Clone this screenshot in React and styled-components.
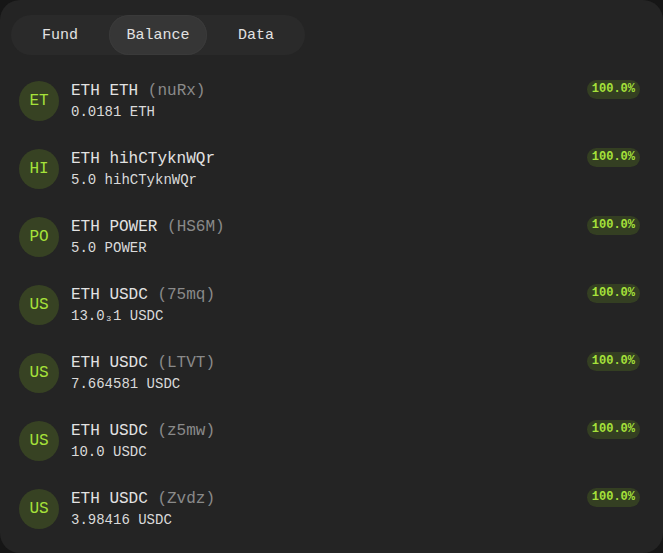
import React from "react";
import styled, { createGlobalStyle } from "styled-components";

const Global = createGlobalStyle`
  html, body {
    margin: 0;
    padding: 0;
    background: #161616;
  }
  body {
    font-family: "Liberation Mono", "DejaVu Sans Mono", monospace;
    -webkit-font-smoothing: antialiased;
  }
`;

const Panel = styled.div`
  width: 663px;
  height: 553px;
  box-sizing: border-box;
  background: #242424;
  border-radius: 20px;
  padding: 15px 0 10px 0;
  display: flex;
  flex-direction: column;
  overflow: hidden;
`;

const TabBar = styled.div`
  flex: none;
  margin-left: 11px;
  width: 294px;
  height: 40px;
  display: grid;
  grid-template-columns: repeat(3, 1fr);
  background: #2a2a2a;
  border-radius: 999px;
`;

const Tab = styled.button`
  all: unset;
  display: flex;
  align-items: center;
  justify-content: center;
  border-radius: 999px;
  font-family: "Liberation Mono", "DejaVu Sans Mono", monospace;
  font-size: 15px;
  color: #e2e2e2;
  background: ${(p) => (p.$active ? "#363636" : "transparent")};
  box-shadow: ${(p) => (p.$active ? "inset 0 0 0 1px #3a3a3a" : "none")};
  cursor: pointer;
`;

const List = styled.div`
  flex: none;
  margin-top: 12px;
  display: flex;
  flex-direction: column;
`;

const Row = styled.div`
  display: flex;
  align-items: center;
  gap: 12px;
  height: 68px;
  box-sizing: border-box;
  padding: 0 23px 0 19px;
`;

const Avatar = styled.div`
  flex: none;
  width: 40px;
  height: 40px;
  border-radius: 50%;
  background: #374223;
  color: #a6e23a;
  display: flex;
  align-items: center;
  justify-content: center;
  font-size: 16px;
`;

const Info = styled.div`
  flex: 1;
  display: flex;
  flex-direction: column;
  min-width: 0;
`;

const Title = styled.div`
  font-size: 16px;
  line-height: 20px;
  color: #e2e2e2;
`;

const Addr = styled.span`
  color: #8a8a8a;
`;

const Amount = styled.div`
  font-size: 14px;
  line-height: 20px;
  padding-top: 1px;
  color: #dadada;
`;

const Badge = styled.span`
  align-self: flex-start;
  margin-top: 13px;
  padding: 2px 5px;
  border-radius: 999px;
  background: #343f22;
  color: #a6e23a;
  font-size: 12px;
  font-weight: 700;
  line-height: 15px;
`;

const tokens = [
  { tag: "ET", name: "ETH ETH", addr: "nuRx", amount: "0.0181 ETH" },
  { tag: "HI", name: "ETH hihCTyknWQr", addr: null, amount: "5.0 hihCTyknWQr" },
  { tag: "PO", name: "ETH POWER", addr: "HS6M", amount: "5.0 POWER" },
  { tag: "US", name: "ETH USDC", addr: "75mq", amount: "13.0\u20831 USDC" },
  { tag: "US", name: "ETH USDC", addr: "LTVT", amount: "7.664581 USDC" },
  { tag: "US", name: "ETH USDC", addr: "z5mw", amount: "10.0 USDC" },
  { tag: "US", name: "ETH USDC", addr: "Zvdz", amount: "3.98416 USDC" },
];

export default function App() {
  return (
    <>
      <Global />
      <Panel>
        <TabBar>
          <Tab>Fund</Tab>
          <Tab $active>Balance</Tab>
          <Tab>Data</Tab>
        </TabBar>
        <List>
          {tokens.map((t, i) => (
            <Row key={i}>
              <Avatar>{t.tag}</Avatar>
              <Info>
                <Title>
                  {t.name}
                  {t.addr && <Addr> ({t.addr})</Addr>}
                </Title>
                <Amount>{t.amount}</Amount>
              </Info>
              <Badge>100.0%</Badge>
            </Row>
          ))}
        </List>
      </Panel>
    </>
  );
}
